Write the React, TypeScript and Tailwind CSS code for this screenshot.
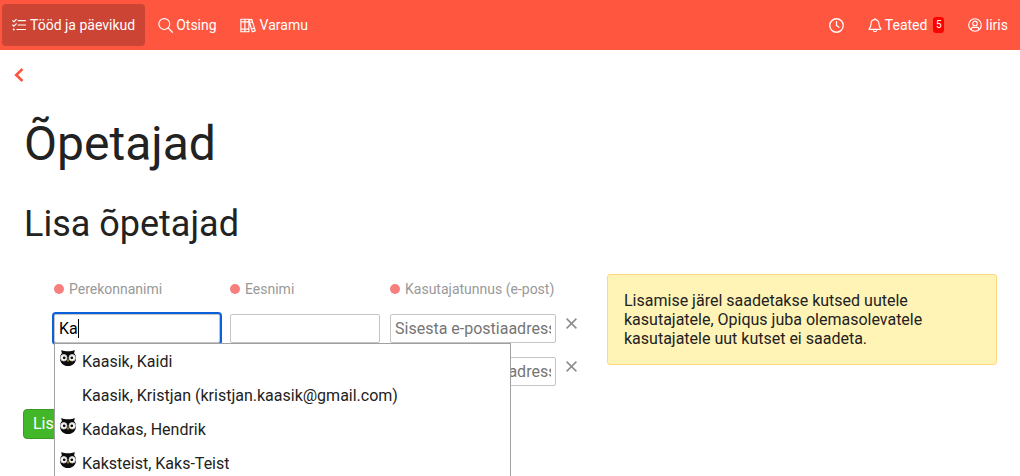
import React, { useState } from 'react';

interface Suggestion {
  label: string;
  hasAccount: boolean;
}

const suggestions: Suggestion[] = [
  { label: 'Kaasik, Kaidi', hasAccount: true },
  { label: 'Kaasik, Kristjan (kristjan.kaasik@gmail.com)', hasAccount: false },
  { label: 'Kadakas, Hendrik', hasAccount: true },
  { label: 'Kaksteist, Kaks-Teist', hasAccount: true },
];

const Icon: React.FC<{ className: string; children: React.ReactNode }> = ({ className, children }) => (
  <svg viewBox="0 0 16 16" className={className} fill="none" stroke="currentColor" strokeLinecap="round" strokeLinejoin="round" aria-hidden="true">
    {children}
  </svg>
);

const TasksIcon = () => (
  <Icon className="size-[14px]">
    <path d="M.8 3l1.4 1.4L4.8 1.6M.8 8l1.4 1.4 2.6-2.8M7 3h8.4M7 8h8.4M5.6 13.2h9.8" strokeWidth="1.3" />
    <circle cx="2" cy="13.2" r="1.1" fill="currentColor" stroke="none" />
  </Icon>
);

const SearchIcon = () => (
  <Icon className="size-[15px]">
    <circle cx="6.7" cy="6.4" r="5.8" strokeWidth="1.2" />
    <path d="M10.9 10.6l4.4 4.6" strokeWidth="1.3" />
  </Icon>
);

const BooksIcon = () => (
  <svg viewBox="0 0 18 16" className="h-[15px] w-4" fill="none" stroke="currentColor" strokeWidth="1.3" strokeLinejoin="round" aria-hidden="true">
    <path d="M1 1h9v14H1zM5.5 1v14M1 4h9M1 12h9M10 2l3.2-.9L17.2 14l-3.4 1L10 2M10.8 4.7l3.3-.9M12.9 12l3.4-1" />
  </svg>
);

const ClockIcon = () => (
  <Icon className="size-[15px]">
    <circle cx="8" cy="8" r="7.2" strokeWidth="1.4" />
    <path d="M8 3.8V8l2.6 1.8" strokeWidth="1.4" />
  </Icon>
);

const BellIcon = () => (
  <Icon className="size-[14px]">
    <path d="M8 .6v1.3M8 1.9c-2.8 0-4.5 2-4.5 4.6 0 3.2-1 4.4-2.1 5.5-.4.5 0 1 .5 1h12.2c.5 0 .9-.5.5-1-1.1-1.1-2.1-2.3-2.1-5.5C12.5 3.9 10.8 1.9 8 1.9zM6.3 14.5c.2.7.9 1.1 1.7 1.1s1.5-.4 1.7-1.1" strokeWidth="1.3" />
  </Icon>
);

const UserIcon = () => (
  <Icon className="size-[14px]">
    <circle cx="8" cy="8" r="7.2" strokeWidth="1.3" />
    <circle cx="8" cy="6.2" r="2.6" strokeWidth="1.3" />
    <path d="M3.4 13.2c.4-2 1.6-2.7 2.9-2.7.7.3 2.7.3 3.4 0 1.3 0 2.5.7 2.9 2.7" strokeWidth="1.3" />
  </Icon>
);

const OwlIcon = () => (
  <svg viewBox="0 0 16 16" className="size-4" aria-hidden="true">
    <path d="M1.5 0c2 1.2 4 1.2 6.500 1.200S12.500 1.200 14.500 0c.3 1.200 0 2.300-.6 3 1.400 1.300 2.100 3 2.100 5.200C16 13 12.600 16 8 16s-8-3-8-7.800C0 6 .7 4.300 2.100 3 1.500 2.300 1.200 1.200 1.500 0z" fill="#0c0c0c" />
    <circle cx="3.8" cy="7.8" r="3.2" fill="#fff" stroke="#c8c8c8" strokeWidth="1" />
    <circle cx="12.2" cy="7.8" r="3.2" fill="#fff" stroke="#c8c8c8" strokeWidth="1" />
    <circle cx="4.2" cy="7.8" r="1.400" fill="#0c0c0c" />
    <circle cx="11.8" cy="7.8" r="1.400" fill="#0c0c0c" />
    <path d="M7 9.600h2l-1 2.900z" fill="#d4a91f" />
  </svg>
);

const FieldLabel: React.FC<{ htmlFor: string; children: React.ReactNode }> = ({ htmlFor, children }) => (
  <label htmlFor={htmlFor} className="flex items-center gap-[5px] whitespace-nowrap text-sm text-[#999]">
    <span className="size-[10px] shrink-0 rounded-full bg-[#f77f7f]" />
    {children}
  </label>
);

const inputClass = 'h-[29px] w-full min-w-0 rounded-xs border border-[#c4c4c4] bg-white px-1 text-base text-black placeholder:text-[#757575]';

const RemoveButton = () => (
  <button type="button" aria-label="Eemalda" className="mt-1 flex h-[10px] items-center text-[#8c8c8c]">
    <svg viewBox="0 0 11 11" className="size-[11px]" stroke="currentColor" strokeWidth="1.5" aria-hidden="true">
      <path d="M.6.6l9.8 9.8M10.4.6L.6 10.4" />
    </svg>
  </button>
);

const rowClass = 'grid grid-cols-[166fr_150fr_166fr_11px] gap-x-[10px]';

const App: React.FC = () => {
  const [lastName, setLastName] = useState('Ka');

  return (
    <div className="min-h-screen overflow-hidden bg-white font-[Roboto,sans-serif] text-[#222]">
      <header className="flex h-[50px] items-center justify-between bg-[#ff5640] pr-3 pl-[2px] text-sm text-white">
        <nav className="flex items-center">
          <a href="#tood" className="flex h-[42px] items-center gap-1 rounded bg-[#cc4433] px-[10px]">
            <TasksIcon />
            Tööd ja päevikud
          </a>
          <a href="#otsing" className="ml-[3px] flex h-[42px] items-center gap-[3px] px-[10px]">
            <SearchIcon />
            Otsing
          </a>
          <a href="#varamu" className="ml-[3px] flex h-[42px] items-center gap-1 px-[10px]">
            <BooksIcon />
            Varamu
          </a>
        </nav>
        <div className="flex items-center gap-6">
          <button type="button" aria-label="Ajalugu">
            <ClockIcon />
          </button>
          <a href="#teated" className="flex items-center gap-[3px]">
            <BellIcon />
            Teated
            <span className="ml-[3px] flex h-4 w-[11px] items-center justify-center rounded-[3px] bg-[#f00] text-[10px]">5</span>
          </a>
          <a href="#profiil" className="flex items-center gap-[3px]">
            <UserIcon />
            Iiris
          </a>
        </div>
      </header>

      <a href="#tagasi" aria-label="Tagasi" className="ml-[14px] flex h-[50px] w-3 items-center text-[#ff5640]">
        <svg viewBox="0 0 10 14" className="h-[14px] w-[10px]" fill="none" stroke="currentColor" strokeWidth="2.6" aria-hidden="true">
          <path d="M8.5 1L2.2 7l6.3 6" />
        </svg>
      </a>

      <main className="pr-[23px] pl-6">
        <h1 className="mt-4 text-5xl leading-[56px]">Õpetajad</h1>
        <h2 className="mt-8 text-4xl leading-10">Lisa õpetajad</h2>

        <div className="mt-[30px] grid grid-cols-[583fr_390fr] items-start">
          <form>
            <div className="px-[30px] pt-[5px]">
              <div className={rowClass}>
                <FieldLabel htmlFor="lastName1">Perekonnanimi</FieldLabel>
                <FieldLabel htmlFor="firstName1">Eesnimi</FieldLabel>
                <FieldLabel htmlFor="email1">Kasutajatunnus (e-post)</FieldLabel>
              </div>

              <div className={`${rowClass} mt-[15px]`}>
                <div className="relative">
                  <input
                    id="lastName1"
                    value={lastName}
                    onChange={e => setLastName(e.target.value)}
                    autoComplete="off"
                    className={`${inputClass} caret-transparent outline-2 outline-[#0a5fdb]`}
                  />
                  <span className="absolute top-[5px] left-[24px] h-[19px] w-px bg-black" />
                  <ul className="absolute top-[29px] left-0 z-10 w-[457px] border border-[#a0a0a0] bg-white">
                    {suggestions.map(item => (
                      <li key={item.label} className="flex h-[34px] items-start px-[5px] pt-[6px]">
                        <span className="mr-[6px] size-4">{item.hasAccount && <OwlIcon />}</span>
                        <span className="leading-6">{item.label}</span>
                      </li>
                    ))}
                  </ul>
                </div>
                <input id="firstName1" className={inputClass} />
                <input id="email1" type="email" placeholder="Sisesta e-postiaadress" className={inputClass} />
                <RemoveButton />
              </div>

              <div className={`${rowClass} mt-[14px]`}>
                <input aria-label="Perekonnanimi" className={inputClass} />
                <input aria-label="Eesnimi" className={inputClass} />
                <input aria-label="Kasutajatunnus (e-post)" type="email" placeholder="Sisesta e-postiaadress" className={inputClass} />
                <RemoveButton />
              </div>
            </div>

            <button type="button" className="mt-[23px] -ml-px h-[30px] rounded border border-[#3a9a26] bg-[#43b72a] px-[9px] text-base leading-7 text-white">
              Lisa
            </button>
          </form>

          <p className="rounded-[3px] border border-[#ffd780] bg-[#fff3b5] p-4 leading-[19px]">
            Lisamise järel saadetakse kutsed uutele kasutajatele, Opiqus juba olemasolevatele kasutajatele uut kutset ei saadeta.
          </p>
        </div>
      </main>
    </div>
  );
};

export default App;
